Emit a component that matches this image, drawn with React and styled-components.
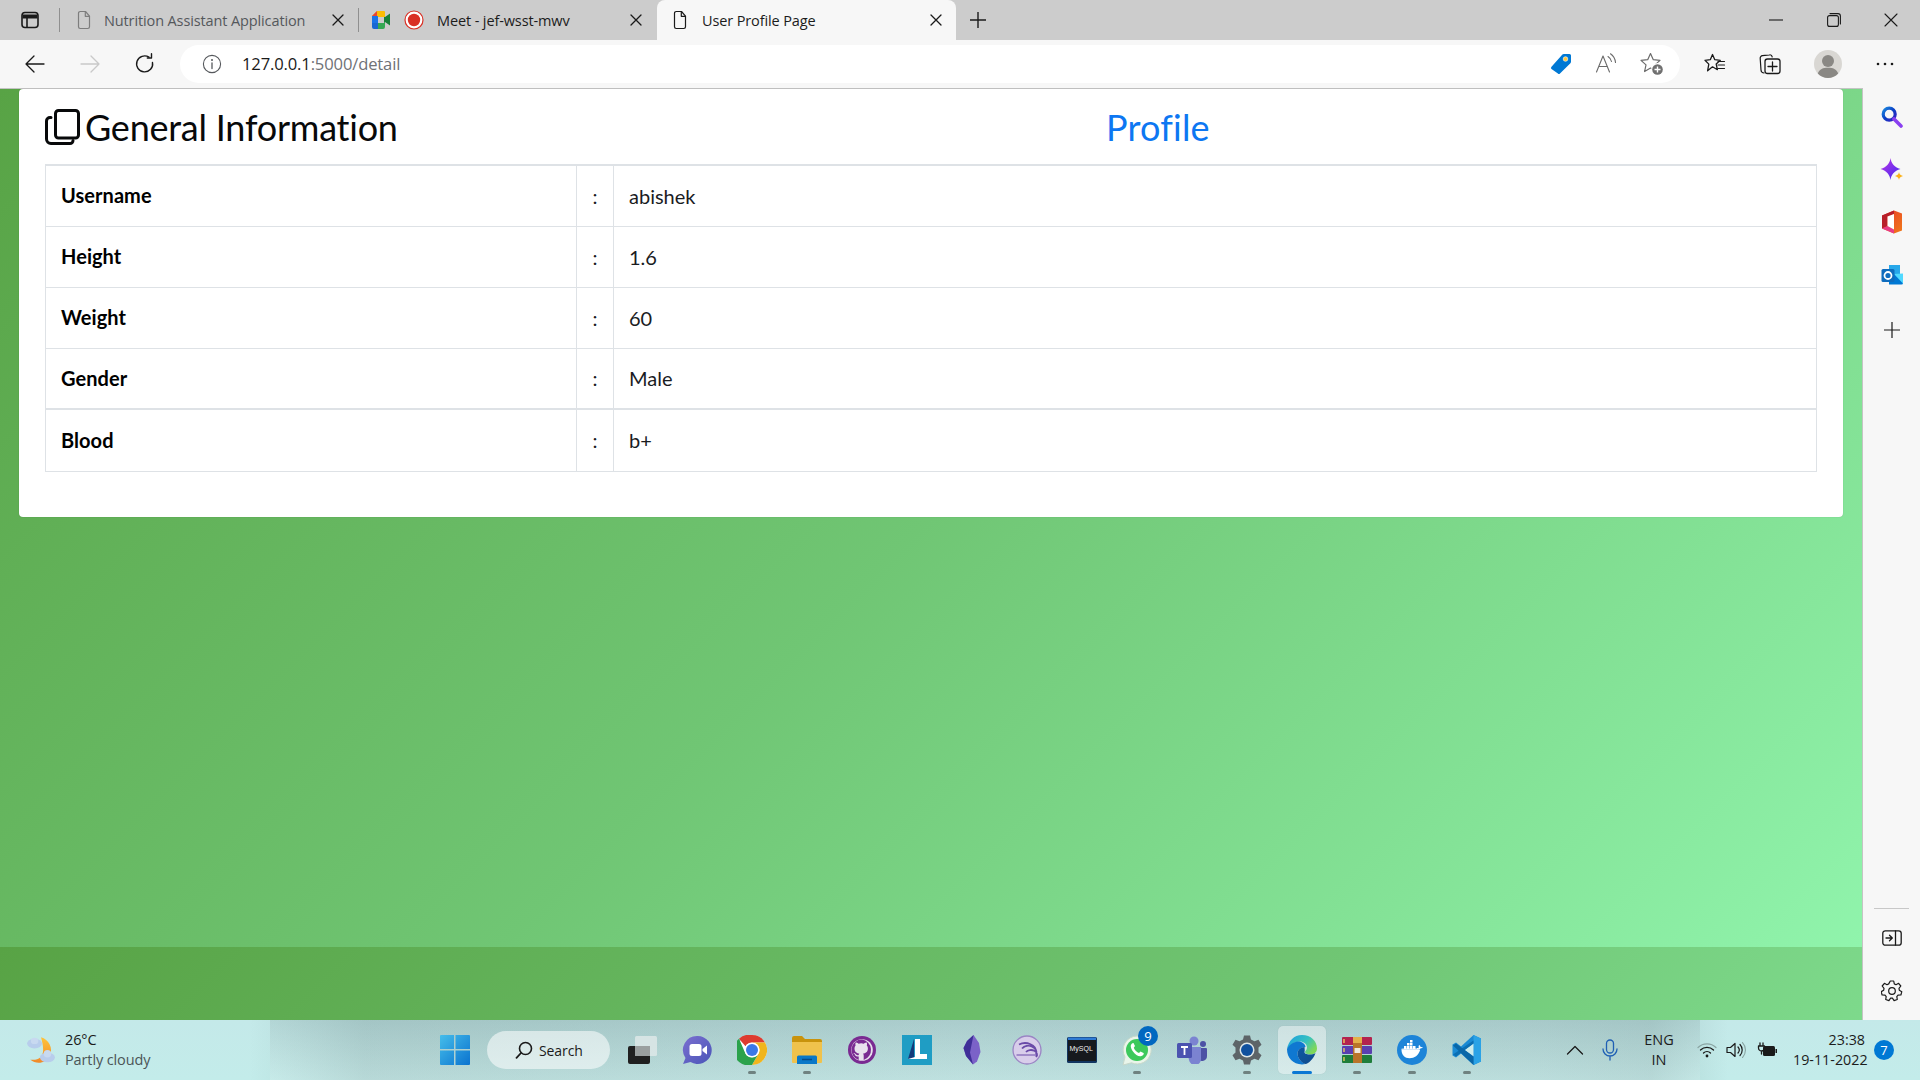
import React from "react";
import styled, { createGlobalStyle } from "styled-components";

const Global = createGlobalStyle`
  html, body { margin: 0; padding: 0; overflow: hidden; }
  body { font-family: "Open Sans", "Liberation Sans", sans-serif; }
  * { box-sizing: border-box; }
`;

const Screen = styled.div`
  width: 1920px; height: 1080px; display: flex; flex-direction: column; overflow: hidden;
`;

/* ---------- tab strip ---------- */
const TabStrip = styled.div`
  height: 40px; background: #cccccc; display: flex; align-items: flex-start; flex: none;
`;
const StripToggle = styled.div`
  width: 59px; height: 40px; display: flex; align-items: center; justify-content: center;
`;
const Separator = styled.div`
  width: 1px; height: 24px; margin-top: 8px; background: #8f8f8f; flex: none;
`;
const Tab = styled.div`
  height: ${p => (p.$active ? 44 : 40)}px; width: ${p => p.$w}px; flex: none; display: flex; align-items: center;
  padding: 0 ${p => p.$pr || 14}px 0 ${p => p.$pl}px; gap: ${p => p.$gap || 10}px; position: relative; z-index: 1;
  background: ${p => (p.$active ? "#f7f7f7" : "transparent")};
  border-radius: ${p => (p.$active ? "8px 8px 0 0" : "0")};
  padding-bottom: ${p => (p.$active ? 4 : 0)}px;
`;
const TabTitle = styled.span`
  flex: 1; font-size: 14.5px; letter-spacing: -0.12px; white-space: nowrap;
  color: ${p => p.$dim ? "#55585c" : "#1c1c1c"};
`;
const NewTab = styled.div`
  width: 44px; height: 40px; display: flex; align-items: center; justify-content: center;
`;
const WindowControls = styled.div`
  margin-left: auto; display: flex; height: 40px;
`;
const WinBtn = styled.div`
  width: 57.5px; height: 40px; display: flex; align-items: center; justify-content: center;
`;

/* ---------- toolbar ---------- */
const Toolbar = styled.div`
  height: 48px; background: #f7f7f7; display: flex; align-items: center; flex: none;
  padding-left: 7px;
`;
const NavBtn = styled.div`
  width: 55px; height: 40px; display: flex; align-items: center; justify-content: center; flex: none;
`;
const AddressBar = styled.div`
  width: 1500px; height: 38px; margin-left: 8px; margin-top: -1px; background: #fff; border-radius: 19px; flex: none;
  display: flex; align-items: center; padding: 0 16px 0 22px;
`;
const Url = styled.div`
  margin-left: 20px; font-size: 16.6px; letter-spacing: -0.15px; color: #1a1a1a; flex: 1;
  span { color: #6f7276; }
`;
const BarIcons = styled.div`
  display: flex; align-items: center; gap: 23px;
`;
const ToolIcons = styled.div`
  display: flex; align-items: center; margin-left: 7px;
`;
const ToolBtn = styled.div`
  width: ${p => p.$w}px; height: 40px; display: flex; align-items: center; justify-content: center;
`;

/* ---------- body ---------- */
const Middle = styled.div`
  flex: 1; display: flex; min-height: 0;
`;
const Page = styled.main`
  flex: 1; min-width: 0; border-top: 1px solid #c4c4c4;
  background-image: linear-gradient(135deg, #58a345 0%, #70c674 50%, #90f4ac 100%);
  background-size: 100% 858px; background-repeat: repeat-y;
  background-origin: padding-box;
`;
const Card = styled.section`
  width: 1824px; margin-left: 19px; height: 428px; background: #fff; border-radius: 4px;
  padding: 0 26px; box-shadow: 0 0 1px rgba(0,0,0,.25);
`;
const CardHead = styled.header`
  height: 75px; display: flex; align-items: center;
`;
const Title = styled.h3`
  margin: 0; width: 1062px; display: flex; align-items: center; gap: 5px;
  font: 400 36px/44px Lato, sans-serif; letter-spacing: -0.23px; color: #08090a;
`;
const ProfileLink = styled.span`
  font: 400 36px/44px Lato, sans-serif; letter-spacing: 0.2px; margin-left: -1px; color: #0d77f2;
`;
const InfoTable = styled.table`
  width: 1772px; border-collapse: collapse; table-layout: fixed;
  font-family: Lato, sans-serif; font-size: 20px; color: #1a1c1f;
`;
const Row = styled.tr`
  height: ${p => p.$thick ? 62 : 61}px; border-top: ${p => p.$thick ? 2 : 1}px solid #dee2e6;
  &:first-child { border-top: 2px solid #dee2e6; }
`;
const LabelCell = styled.td`
  width: 531px; padding: 0 15px 1px; font-weight: 700; letter-spacing: 0.05px; color: #000; border: 1px solid #dee2e6; border-top: 0;
`;
const ColonCell = styled.td`
  width: 37px; padding: 0; text-align: center; border: 1px solid #dee2e6; border-top: 0;
`;
const ValueCell = styled.td`
  padding: 0 15px; border: 1px solid #dee2e6; border-top: 0;
`;

/* ---------- sidebar ---------- */
const Sidebar = styled.aside`
  width: 58px; flex: none; background: #f7f7f7; border-left: 1px solid #c4c4c4;
  display: flex; flex-direction: column; align-items: center; padding: 3px 0;
`;
const SideBtn = styled.div`
  width: 40px; height: ${p => p.$h || 52.5}px; display: flex; align-items: center; justify-content: center; flex: none;
`;
const SideRule = styled.div`
  width: 35px; height: 1px; background: #c8c8c8; margin-top: auto; margin-bottom: 3px;
`;

/* ---------- taskbar ---------- */
const Taskbar = styled.footer`
  height: 60px; flex: none; display: flex; align-items: center;
  background:
    linear-gradient(180deg, rgba(85,105,105,.12), rgba(255,255,255,.12)) 270px 0 / 1430px 100% no-repeat,
    linear-gradient(90deg, rgba(120,150,150,0) 13%, rgba(110,140,140,.25) 19%, rgba(110,140,140,.16) 50%, rgba(110,140,140,.2) 80%, rgba(110,140,140,.25) 86%, rgba(120,150,150,0) 90%),
    linear-gradient(180deg, #c4e9e9 0%, #c3ecea 100%);
`;
const Weather = styled.div`
  width: 427px; flex: none; padding-left: 26px; display: flex; align-items: center; gap: 9px;
`;
const WeatherText = styled.div`
  font-size: 14.5px; line-height: 20px; color: #1a1a1a; letter-spacing: -0.12px;
  small { display: block; font-size: 14.5px; color: #4b5557; }
`;
const TaskIcon = styled.div`
  width: ${p => p.$w || 55}px; height: 48px; flex: none; display: flex; align-items: center; justify-content: center;
  position: relative; border-radius: 5px;
  background: ${p => p.$active ? "rgba(255,255,255,.42)" : "transparent"};
  box-shadow: ${p => p.$active ? "0 0 1px rgba(0,0,0,.15)" : "none"};
  ${p => p.$active ? "width: 48px; margin: 0 3.5px;" : ""}
`;
const RunDot = styled.span`
  position: absolute; bottom: 0; left: 50%; height: 3px; border-radius: 2px;
  width: ${p => p.$active ? 20 : 8}px; transform: translateX(-50%);
  background: ${p => p.$active ? "#0a78d4" : "#6f8280"};
`;
const Badge = styled.span`
  position: absolute; top: 0; left: 29px; width: 20px; height: 20px; border-radius: 50%;
  background: #0067c0; color: #fff; font-size: 13px; display: flex; align-items: center; justify-content: center;
`;
const SearchPill = styled.div`
  width: 123px; height: 38px; margin: 0 4px 0 5px; border-radius: 19px; flex: none;
  background: rgba(255,255,255,.55); display: flex; align-items: center; padding-left: 28px; gap: 6px;
  font-size: 14px; color: #1a1a1a; letter-spacing: -0.1px;
`;
const Tray = styled.div`
  flex: 1; display: flex; align-items: center; padding-left: 71px; height: 60px;
`;
const TrayIcon = styled.div`
  width: ${p => p.$w}px; flex: none; display: flex; align-items: center; justify-content: center;
`;
const Lang = styled.div`
  width: 48px; flex: none; text-align: center; font-size: 14.5px; line-height: 20px; color: #1c1c1c;
`;
const Clock = styled.div`
  width: 72px; text-align: right; font-size: 14.3px; line-height: 20px; color: #1c1c1c; flex: none; white-space: nowrap;
  direction: rtl;
`;
const Notify = styled.div`
  width: 20px; height: 20px; margin-left: 9px; border-radius: 50%; background: #0078d4; color: #fff; font-size: 13px;
  display: flex; align-items: center; justify-content: center; flex: none;
`;
const ClockLine = styled.div`
  direction: ltr; unicode-bidi: isolate;
`;

/* ---------- icons ---------- */
const s = { fill: "none", stroke: "currentColor", strokeLinecap: "round", strokeLinejoin: "round" };
const Ico = ({ w = 20, h, vb, children, color = "#1a1a1a" }) => (
  <svg width={w} height={h || w} viewBox={vb || `0 0 ${w} ${h || w}`} style={{ color, display: "block", flex: "none" }}>{children}</svg>
);
const PanelIcon = () => <Ico><rect x="2" y="2.5" width="16" height="15" rx="3" {...s} strokeWidth="1.6"/><path d="M2.5 6.5h15" stroke="#1a1a1a" strokeWidth="4"/><path d="M7 6v11" {...s} strokeWidth="1.6"/></Ico>;
const DocIcon = ({ color }) => <Ico w={16} h={20} color={color}><path d="M2.5 3.2A1.7 1.7 0 0 1 4.2 1.5h5.3l4 4.6v10.7a1.7 1.7 0 0 1-1.7 1.7H4.2a1.7 1.7 0 0 1-1.7-1.7z" {...s} strokeWidth="1.2"/><path d="M9.3 1.8v4.5h4" {...s} strokeWidth="1.2"/></Ico>;
const XIcon = ({ size = 12, sw = 1.3, color = "#1a1a1a" }) => <Ico w={size} color={color}><path d={`M1 1L${size - 1} ${size - 1}M${size - 1} 1L1 ${size - 1}`} {...s} strokeWidth={sw}/></Ico>;
const MeetIcon = () => <Ico w={20}>
  <path d="M1 6l5-5h7v6H7v6H1z" fill="#fbbc04"/><path d="M1 6h6v7H1z" fill="#1a73e8"/><path d="M1 13h6v6H3a2 2 0 0 1-2-2z" fill="#1967d2"/>
  <path d="M7 13h6v-3h1v7a2 2 0 0 1-2 2H7z" fill="#34a853"/><path d="M6 1h7a1 1 0 0 1 1 1v8h-1V7H7z" fill="#fbbc04"/><path d="M13 7h1l5-3.5v12L14 12h-1z" fill="#188038"/><path d="M1 6l5-5v5z" fill="#ea4335"/>
</Ico>;
const RecIcon = () => <Ico w={20}><circle cx="10" cy="10" r="9" fill="#fff" stroke="#d93025" strokeWidth="1.2"/><circle cx="10" cy="10" r="6.2" fill="#d93025"/></Ico>;
const PlusIcon = ({ size = 18, sw = 1.4, color = "#1a1a1a" }) => <Ico w={size} color={color}><path d={`M${size / 2} 1V${size - 1}M1 ${size / 2}H${size - 1}`} {...s} strokeLinecap="butt" strokeWidth={sw}/></Ico>;
const ArrowIcon = ({ dir = "left", color }) => <Ico w={22} color={color}><path d={dir === "left" ? "M20 11H2M10 3l-8 8 8 8" : "M2 11h18M12 3l8 8-8 8"} {...s} strokeWidth="1.3"/></Ico>;
const ReloadIcon = () => <Ico w={22}><path d="M18.5 9.5A8 8 0 1 1 15 4.2" {...s} strokeWidth="1.4"/><path d="M15.5 0.8v4.2h-4.2" {...s} transform="translate(2 0)" strokeWidth="1.4"/></Ico>;
const InfoIcon = () => <Ico color="#55585c"><circle cx="10" cy="10" r="8.6" {...s} strokeWidth="1.1"/><path d="M10 9v5.5" {...s} strokeWidth="1.3"/><circle cx="10" cy="5.9" r="1" fill="currentColor"/></Ico>;
const TagIcon = () => <Ico w={22}><path d="M1.5 13.7L12.4 1.6a2 2 0 0 1 1.4-.6h5.7A1.5 1.5 0 0 1 21 2.5v6.3a2 2 0 0 1-.6 1.4L10 20.5a1.5 1.5 0 0 1-2.1 0L1.5 16a1.6 1.6 0 0 1 0-2.3z" fill="#0078d4"/><circle cx="15.5" cy="6" r="2.3" fill="#ffc83d" stroke="#fff" strokeWidth=".6"/></Ico>;
const ReadIcon = () => <Ico w={22} color="#6b6b6b"><path d="M1.5 19L8 3l6.5 16M4 13.5h8.5" {...s} strokeWidth="1.1"/><path d="M13 3.5a8 8 0 0 1 3.5 5M15.5 0.8a12 12 0 0 1 5 8.7" {...s} strokeWidth="1.1"/></Ico>;
const StarAddIcon = () => <Ico w={24} color="#6b6b6b"><path d="M10.5 1.5l2.8 6.2 6.7.7-5 4.5 1.4 6.6-5.900-3.400-5.900 3.400 1.400-6.600-5-4.500 6.700-.7z" {...s} strokeWidth="1.2"/><circle cx="17.500" cy="17.500" r="6.400" fill="#fff"/><circle cx="17.500" cy="17.500" r="5.300" fill="#707070"/><path d="M17.500 14.500v6M14.500 17.500h6" stroke="#fff" strokeWidth="1.4"/></Ico>;
const FavIcon = () => <Ico w={22}><path d="M8.5 1.5l2.3 5.2 5.5.6-4.1 3.8 1.2 5.6-4.9-2.9-4.9 4 1.2-6.7L1 7.3l5.3-.6z" {...s} strokeWidth="1.3"/><path d="M14 8.5h6.5M14 12h6.5M14 15.5h6.5" {...s} strokeWidth="1.2"/></Ico>;
const CollectIcon = () => <Ico w={22}><path d="M5 20a3 3 0 0 1-3-3L1.2 5.5A2.6 2.6 0 0 1 3.5 2.6l7-.8a2.4 2.4 0 0 1 2.7 2" {...s} strokeWidth="1.2" /><rect x="6" y="6" width="15" height="14.5" rx="2.5" fill="#f7f7f7" stroke="#1a1a1a" strokeWidth="1.3"/><path d="M13.5 9v9M9 13.5h9" {...s} strokeWidth="1.3"/></Ico>;
const AvatarIcon = () => <Ico w={28}><circle cx="14" cy="14" r="14" fill="#d9d7d3"/><circle cx="14" cy="11" r="6" fill="#8a8884"/><path d="M3.8 23.5C5.5 19 9 17.8 14 17.8s8.5 1.2 10.2 5.7A14 14 0 0 1 14 28a14 14 0 0 1-10.2-4.5z" fill="#8a8884"/></Ico>;
const MoreIcon = () => <Ico w={18} h={4}><circle cx="2" cy="2" r="1.3" fill="#1a1a1a"/><circle cx="9" cy="2" r="1.3" fill="#1a1a1a"/><circle cx="16" cy="2" r="1.3" fill="#1a1a1a"/></Ico>;
const MinIcon = () => <Ico w={14} h={2}><path d="M0 1h14" stroke="#1a1a1a" strokeWidth="1.1"/></Ico>;
const MaxIcon = () => <Ico w={14}><rect x=".6" y="2.6" width="10.8" height="10.8" rx="2" {...s} strokeWidth="1.1"/><path d="M3 .6h8a2.4 2.4 0 0 1 2.4 2.4v8" {...s} strokeWidth="1.1"/></Ico>;
const CopyTitleIcon = () => <Ico w={35} h={36} color="#08090a">
  <rect x="10.5" y="1.5" width="23" height="27.500" rx="3" {...s} strokeWidth="3"/>
  <path d="M6 8.5 H5 A3.5 3.5 0 0 0 1.5 12 V30 A4.5 4.5 0 0 0 6 34.5 H25 A3 3 0 0 0 28 31.5" {...s} strokeWidth="3"/>
</Ico>;

const BingIcon = () => <Ico w={22}><defs><linearGradient id="bs" x1="0" y1="0" x2="1" y2="1"><stop offset="0" stopColor="#1c8ae0"/><stop offset=".5" stopColor="#0b3fc4"/><stop offset="1" stopColor="#3a1ec2"/></linearGradient></defs><circle cx="8.2" cy="8.2" r="6" fill="none" stroke="url(#bs)" strokeWidth="3.2"/><path d="M13 13l7 7" stroke="#8a3ff0" strokeWidth="3.6" strokeLinecap="round"/></Ico>;
const SparkleIcon = () => <Ico w={24} h={24}><defs><linearGradient id="sp" x1="0" y1="0" x2="1" y2="1"><stop offset="0" stopColor="#c034e6"/><stop offset="1" stopColor="#3a2cf0"/></linearGradient></defs><path d="M10.500 0c.8 5.500 3.500 9 10 11-6.500 2-9.200 5.500-10 11-.8-5.500-3.500-9-10-11 6.500-2 9.200-5.500 10-11z" fill="url(#sp)"/><path d="M19 14c.4 2.200 1.200 3.100 4 4-2.800.9-3.600 1.800-4 4-.4-2.200-1.200-3.100-4-4 2.800-.9 3.600-1.800 4-4z" fill="#fbb21b"/></Ico>;
const OfficeIcon = () => <Ico w={22} h={24}><defs><linearGradient id="of" x1="0" y1="0" x2="1" y2="1"><stop offset="0" stopColor="#e83a2a"/><stop offset="1" stopColor="#f07a1a"/></linearGradient></defs><path d="M1 5.500L13 0.500 21 3.500V20.500L13 23.500 1 18.500z" fill="url(#of)"/><path d="M1 5.500L13 .5v3.500L6.500 6.500V16L1 18.500z" fill="#b81f2a"/><path d="M1 18.500l5.500-2.500 6.500 3.500v4z" fill="#e83b86"/><path d="M6.500 6.500L13 4v15.500L6.500 16z" fill="#fff"/></Ico>;
const OutlookIcon = () => <Ico w={22} h={22}><path d="M8 1h11v9H8z" fill="#28a8ea"/><path d="M8 10h12l2 0v9a1.500 1.500 0 0 1-1.500 1.500H8z" fill="#0078d4"/><path d="M13 10l9-0.500v10z" fill="#50d9ff"/><rect x="0.500" y="5" width="13" height="13" rx="1.500" fill="#0f6cbd"/><circle cx="7" cy="11.500" r="3.500" fill="none" stroke="#fff" strokeWidth="1.800"/></Ico>;
const SplitIcon = () => <Ico w={20} h={16}><rect x=".8" y=".8" width="18.400" height="14.400" rx="2.500" {...s} strokeWidth="1.300"/><path d="M13.500 1v14" {...s} strokeWidth="1.300"/><path d="M4 8h6M7.500 5.200L10.300 8l-2.800 2.800" {...s} strokeWidth="1.300"/></Ico>;
const GearIcon = () => <Ico w={22}><path d="M9.300 1.500h3.400l.6 2.900 1.700.8 2.600-1.400 2.200 2.700-1.800 2.300.3 1.900 2.500 1.500-.9 3.300-2.900.1-1.200 1.500.5 2.900-3.200 1.100-1.700-2.400h-1.800l-1.700 2.400-3.200-1.100.5-2.900-1.200-1.500-2.900-.1-.9-3.300 2.500-1.500.3-1.900L1.200 6.500l2.200-2.700L6 5.200l1.700-.8z" {...s} strokeWidth="1.200" transform="translate(0 -.5)"/><circle cx="11" cy="11" r="3.300" {...s} strokeWidth="1.200"/></Ico>;

const WeatherIcon = () => <Ico w={30} h={30} vb="1 1 28 28"><defs><linearGradient id="mn" x1="0" y1="0" x2="0" y2="1"><stop offset="0" stopColor="#ffc43a"/><stop offset="1" stopColor="#f0892a"/></linearGradient></defs><path d="M15 3c7 2 12 10 8 18-3 6-12 8-18 3 7 1 12-2 12-9 0-5-1-8-2-12z" fill="url(#mn)"/><ellipse cx="9" cy="9" rx="7" ry="4.500" fill="#b8cdec"/><ellipse cx="9" cy="6.500" rx="3.500" ry="3" fill="#c8d9f0"/><ellipse cx="21" cy="22" rx="7" ry="4.500" fill="#b8cdec"/><ellipse cx="21" cy="18.500" rx="3.500" ry="3.500" fill="#c8d9f0"/></Ico>;
const StartIcon = () => <Ico w={30} h={30}><defs><linearGradient id="w1" x1="0" y1="0" x2="1" y2="1"><stop offset="0" stopColor="#45bdea"/><stop offset="1" stopColor="#0a73cf"/></linearGradient></defs><path d="M0 1a1 1 0 0 1 1-1h13v14H0zM15.500 0H29a1 1 0 0 1 1 1v13H15.500zM0 15.500h14V30H1a1 1 0 0 1-1-1zM15.500 15.500H30V29a1 1 0 0 1-1 1H15.500z" fill="url(#w1)"/></Ico>;
const SearchGlass = () => <Ico w={18}><circle cx="10.500" cy="7.500" r="6" {...s} strokeWidth="1.600"/><path d="M6 12L1.500 16.800" {...s} strokeWidth="1.800"/></Ico>;
const TaskViewIcon = () => <Ico w={30} h={30}><rect x="1" y="11" width="22" height="18" rx="2" fill="#202020"/><rect x="8" y="1" width="22" height="20" rx="1.500" fill="#dde8e8" fillOpacity=".85"/><rect x="8" y="11" width="15" height="10" fill="#9a9f9f"/></Ico>;
const ChatIcon = () => <Ico w={30} h={30}><defs><linearGradient id="ct" x1="0" y1="0" x2="1" y2="1"><stop offset="0" stopColor="#7b6fd0"/><stop offset="1" stopColor="#4a55b8"/></linearGradient></defs><path d="M15.500 1a14 14 0 1 1-7 26L1 29l2.500-6A14 14 0 0 1 15.500 1z" fill="url(#ct)"/><rect x="7.500" y="9" width="12" height="12" rx="2.500" fill="#fff"/><path d="M20.500 14l4.500-3.500v9L20.500 16z" fill="#fff"/></Ico>;
const ChromeIcon = () => <Ico w={30} h={30}><circle cx="15" cy="15" r="15" fill="#fff"/><path d="M15 0a15 15 0 0 1 13 7.500H15A7.500 7.500 0 0 0 8.500 11.250L2 3.800A15 15 0 0 1 15 0z" fill="#dd3b2f"/><path d="M28 7.500A15 15 0 0 1 15 30l6.500-11.250A7.500 7.500 0 0 0 21.500 11.250 7.500 7.500 0 0 0 15 7.500z" fill="#f0b51d"/><path d="M15 30A15 15 0 0 1 2 3.800l6.500 14.950A7.500 7.500 0 0 0 21.500 18.750z" fill="#2ba24c"/><circle cx="15" cy="15" r="7.300" fill="#fff"/><circle cx="15" cy="15" r="6" fill="#3b78e7"/></Ico>;
const FolderIcon = () => <Ico w={30} h={28}><path d="M0 2a2 2 0 0 1 2-2h8l3 3h15a2 2 0 0 1 2 2v3H0z" fill="#c9930c"/><path d="M0 6h30v20a1 1 0 0 1-1 1H1a1 1 0 0 1-1-1z" fill="#f0c24c"/><path d="M5 21a1.500 1.500 0 0 1 1.500-1.500h17A1.500 1.500 0 0 1 25 21v7H5z" fill="#0a78c8"/><path d="M10 23.500h10" stroke="#064b8a" strokeWidth="1.500"/></Ico>;
const GithubIcon = () => <Ico w={30} h={30}><circle cx="15" cy="15" r="14" fill="#7a2a92"/><circle cx="15" cy="15" r="10.800" fill="#e9e2ee"/><path d="M15 4.500a10.500 10.500 0 0 0-3.300 20.500v-3.500c-3 .6-3.600-1.400-3.600-1.400-.5-1.200-1.200-1.500-1.200-1.500-1-.6.100-.6.100-.6 1.100.1 1.600 1.100 1.600 1.100.9 1.600 2.500 1.200 3.100.9.100-.7.400-1.200.7-1.400-2.400-.3-4.900-1.200-4.900-5.300 0-1.200.4-2.100 1.100-2.900-.1-.3-.5-1.300.1-2.800 0 0 .9-.3 2.900 1.100a10 10 0 0 1 5.200 0c2-1.400 2.900-1.100 2.900-1.100.6 1.500.2 2.500.1 2.800.7.800 1.100 1.700 1.100 2.900 0 4.100-2.500 5-4.900 5.300.4.300.7 1 .7 2v4.300A10.500 10.500 0 0 0 15 4.500z" fill="#7a2a92"/></Ico>;
const LearnIcon = () => <Ico w={30} h={30}><rect width="30" height="30" fill="#1f9dc4"/><path d="M6 24L12 4v20z" fill="#123a7a"/><path d="M13 4h5v15h7v5H6l7-2z" fill="#fff"/></Ico>;
const ObsidianIcon = () => <Ico w={18} h={30}><path d="M10.500 0L4 6 0.500 13l2.500 8 7 8.500 4-3L17.500 17 16 8z" fill="#7b62c8"/><path d="M10.500 0L4 6 0.500 13l2.500 8 7 8.500-3-12z" fill="#3f2f98"/></Ico>;
const TorrentIcon = () => <Ico w={30} h={30}><circle cx="15" cy="15" r="14" fill="#d8cdea" stroke="#9a85c4" strokeWidth="1.300"/><path d="M24 17A11 8.500 0 0 0 7 9.500M24 19.500A8 6.500 0 0 0 10 13.500 M24 22a6 4.500 0 0 0-10-5" fill="none" stroke="#6a4aa8" strokeWidth="1.800"/><path d="M4.500 20h21" stroke="#6a4aa8" strokeWidth="1"/></Ico>;
const MysqlIcon = () => <Ico w={30} h={26}><rect width="30" height="26" rx="1.500" fill="#123460"/><rect x="1" y="3" width="28" height="21" fill="#16191d"/><rect x="1" y="0.500" width="28" height="2.500" fill="#2f7bd4"/><text x="2.500" y="13.500" fontSize="7" fontFamily="Liberation Sans, sans-serif" fill="#eee">MySQL</text></Ico>;
const WhatsappIcon = () => <Ico w={30} h={32}><path d="M15 2a14 14 0 0 0-12 21L1 31l8.500-2.200A14 14 0 1 0 15 2z" fill="#e9f5ea" stroke="#c8d8ca" strokeWidth="1"/><circle cx="15" cy="16" r="11" fill="#3cc95c"/><path d="M10 9.500c-2 1.500-1.500 4.500 1 8s6 5.500 8.500 4.500 2.500-2.500 2-3l-3-1.500-1.500 1.500c-2-.5-4.500-3-5.200-5.200L13 12 11.500 9c-.4-.2-1-.1-1.500.5z" fill="#fff"/></Ico>;
const TeamsIcon = () => <Ico w={30} h={28}><circle cx="17" cy="5" r="4.500" fill="#7b83d1"/><circle cx="26" cy="8" r="3" fill="#4c51a5"/><path d="M21 12h8a1 1 0 0 1 1 1v7a5 5 0 0 1-9 3z" fill="#4c51a5"/><path d="M9 11h15v11a6 6 0 0 1-12 2z" fill="#7b83d1"/><rect y="7" width="15" height="15" rx="1.500" fill="#4b53b0"/><path d="M4 11h7M7.500 11v8" stroke="#fff" strokeWidth="1.800"/></Ico>;
const SettingsIcon = () => <Ico w={30} h={30}><path d="M12 0.500h6l1 4 3.500 1.800 4-1.500 3 5-3 2.700v5l3 2.700-3 5-4-1.500-3.500 1.800-1 4h-6l-1-4-3.500-1.800-4 1.500-3-5 3-2.700v-5L0.500 9.800l3-5 4 1.500L11 4.500z" fill="#5d6468"/><circle cx="15" cy="15" r="7.500" fill="#dfe6e8"/><circle cx="15" cy="15" r="6" fill="#11509e"/></Ico>;
const EdgeIcon = () => <Ico w={32} h={32}><defs><linearGradient id="e1" x1="0" y1="0" x2="1" y2=".6"><stop offset="0" stopColor="#1b9de2"/><stop offset=".6" stopColor="#35c1c0"/><stop offset="1" stopColor="#7fd859"/></linearGradient><linearGradient id="e2" x1="0" y1="0" x2="1" y2="1"><stop offset="0" stopColor="#0c59a4"/><stop offset="1" stopColor="#114a8b"/></linearGradient></defs><path d="M16 1c9 0 15 6 15 13.500 0 4-3.500 6-7 6-3 0-5-1-5-2.500 0-1.200 2-1.800 2-4.500 0-3.500-3.500-6-7-6-5 0-9 3.500-13 7.500C2.500 7 8 1 16 1z" fill="url(#e1)"/><path d="M1 15C4 9.500 9 7.500 12.500 7.500c3.500 0 7 2.500 7 5.500-5 0-8 3-8 6.500 0 4.500 4 9 8 10.500-1 .3-2.500.5-3.500.5C7 30 1 24 1 15z" fill="#0f78d1"/><path d="M11.500 19.500c0-3.500 3-6.500 7-6.500 0 1.500.5 2.500 0 5-.3 1.500 2 2.500 5 2.500 2 0 4.500-.5 6-1.500-2 6-7 10.500-10 11-4-1-8-6-8-10.500z" fill="url(#e2)"/></Ico>;
const WinrarIcon = () => <Ico w={30} h={26}><rect y="0" width="30" height="8" rx="1" fill="#b3234e"/><rect y="9" width="30" height="8" rx="1" fill="#5a3fb0"/><rect y="18" width="30" height="8" rx="1" fill="#1f7d3a"/><rect x="11" width="9" height="26" fill="#b9742a"/><rect x="11" y="0" width="9" height="6" fill="#e4b04a"/><rect x="12.500" y="11" width="6" height="5" fill="#efe8d8"/><path d="M2 2v4M2 11v4M2 20v4" stroke="#f4d35e" strokeWidth="1.300"/></Ico>;
const DockerIcon = () => <Ico w={30} h={30}><circle cx="15" cy="15" r="15" fill="#1d84d8"/><path d="M4.500 14.800h17c1 0 1.700-.6 2.200-1.500 1 .1 1.800-.1 2.300-.7-.8-.6-1.600-.7-2.400-.5-.2-.9-.7-1.500-1.500-2-.6.9-.7 2-.3 3-1.500.6-2 .4-17.300.6z" fill="#fff"/><path d="M4.500 14.800c0 5 3.300 8.500 8 8.500 5 0 9-2.800 10.700-8.500z" fill="#fff"/><path d="M7 11h2.500v3H7zM10 11h2.500v3H10zM13 11h2.500v3H13zM16 11h2.500v3H16zM10 8h2.500v2.600H10zM13 8h2.500v2.600H13zM13 5h2.500v2.600H13z" fill="#fff"/></Ico>;
const VscodeIcon = () => <Ico w={30} h={30}><path d="M21.500 0L29 3.500v23L21.500 30 9 18.500l-5 4-3.500-2v-11l3.500-2 5 4z" fill="#1a8ad4"/><path d="M21.500 0L29 3.500v23L21.500 30z" fill="#2aa2e6"/><path d="M21.500 8.500L12.500 15l9 6.500z" fill="#cdeced"/><path d="M4 21.500l-3-2 20.500-14v3z" fill="#0c6fb3"/><path d="M4 8.500L1 10.500l20.500 19.500V21.500z" fill="#0a67a8"/></Ico>;

const ChevronUp = () => <Ico w={18} h={10}><path d="M1.500 9L9 1.500 16.500 9" {...s} strokeWidth="1.300"/></Ico>;
const MicIcon = () => <Ico w={16} h={22} color="#1f5fb4"><rect x="4.500" y="1" width="7" height="13" rx="3.500" {...s} strokeWidth="1.300"/><path d="M1 10a7 7 0 0 0 14 0M8 17v4" {...s} strokeWidth="1.300"/></Ico>;
const WifiIcon = () => <Ico w={20} h={16}><path d="M1 5.500a13 13 0 0 1 18 0" {...s} stroke="#8aa5a3" strokeWidth="1.200"/><path d="M3.500 8a9.500 9.500 0 0 1 13 0M6.500 11a5 5 0 0 1 7 0" {...s} strokeWidth="1.300"/><circle cx="10" cy="14" r="1.400" fill="#1a1a1a"/></Ico>;
const SpeakerIcon = () => <Ico w={20} h={18}><path d="M1 6.500h3.500L9 2.500v13l-4.500-4H1z" {...s} strokeWidth="1.200"/><path d="M12 6a4.500 4.500 0 0 1 0 6M14 3.500a8 8 0 0 1 0 11" {...s} strokeWidth="1.200"/><path d="M16.500 1.500a11 11 0 0 1 0 15" {...s} stroke="#8aa5a3" strokeWidth="1.100"/></Ico>;
const BatteryIcon = () => <Ico w={20} h={16}><path d="M3 1v3M6 1v3M1.500 4h6v2a3 3 0 0 1-6 0zM4.500 9v3" {...s} strokeWidth="1.300"/><rect x="6" y="4" width="12" height="10" rx="1.500" fill="#1a1a1a"/><path d="M18.500 7h1.500v4h-1.500z" fill="#1a1a1a"/></Ico>;

const rows = [["Username", "abishek"], ["Height", "1.6"], ["Weight", "60"], ["Gender", "Male"], ["Blood", "b+"]];

const apps = [
  { k: "task", el: <TaskViewIcon /> }, { k: "chat", el: <ChatIcon /> },
  { k: "chrome", el: <ChromeIcon />, run: 1 }, { k: "folder", el: <FolderIcon />, run: 1 },
  { k: "gh", el: <GithubIcon /> }, { k: "l", el: <LearnIcon /> }, { k: "obs", el: <ObsidianIcon /> },
  { k: "tor", el: <TorrentIcon /> }, { k: "mysql", el: <MysqlIcon /> },
  { k: "wa", el: <WhatsappIcon />, run: 1, badge: "9" }, { k: "teams", el: <TeamsIcon /> },
  { k: "set", el: <SettingsIcon />, run: 1 }, { k: "edge", el: <EdgeIcon />, active: 1, run: 1 },
  { k: "rar", el: <WinrarIcon />, run: 1 }, { k: "dock", el: <DockerIcon />, run: 1 }, { k: "vs", el: <VscodeIcon />, run: 1 },
];

export default function App() {
  return (
    <Screen>
      <Global />
      <TabStrip>
        <StripToggle><PanelIcon /></StripToggle>
        <Separator />
        <Tab $w={298} $pl={16} $gap={12}>
          <DocIcon color="#7d7d7d" /><TabTitle $dim>Nutrition Assistant Application</TabTitle><XIcon />
        </Tab>
        <Separator />
        <Tab $w={298} $pl={12} $gap={13} $pr={15}>
          <MeetIcon /><RecIcon /><TabTitle>Meet - jef-wsst-mwv</TabTitle><XIcon />
        </Tab>
        <Tab $active $w={299} $pl={15} $gap={14}>
          <DocIcon color="#1a1a1a" /><TabTitle>User Profile Page</TabTitle><XIcon />
        </Tab>
        <NewTab><PlusIcon /></NewTab>
        <WindowControls>
          <WinBtn><MinIcon /></WinBtn>
          <WinBtn><MaxIcon /></WinBtn>
          <WinBtn><XIcon size={14} sw={1.1} /></WinBtn>
        </WindowControls>
      </TabStrip>
      <Toolbar>
        <NavBtn><ArrowIcon /></NavBtn>
        <NavBtn><ArrowIcon dir="right" color="#c9c9c9" /></NavBtn>
        <NavBtn><ReloadIcon /></NavBtn>
        <AddressBar>
          <InfoIcon />
          <Url>127.0.0.1<span>:5000/detail</span></Url>
          <BarIcons><TagIcon /><ReadIcon /><StarAddIcon /></BarIcons>
        </AddressBar>
        <ToolIcons>
          <ToolBtn $w={56}><FavIcon /></ToolBtn>
          <ToolBtn $w={54}><CollectIcon /></ToolBtn>
          <ToolBtn $w={62}><AvatarIcon /></ToolBtn>
          <ToolBtn $w={52}><MoreIcon /></ToolBtn>
        </ToolIcons>
      </Toolbar>
      <Middle>
        <Page>
          <Card>
            <CardHead>
              <Title><CopyTitleIcon />General Information</Title>
              <ProfileLink>Profile</ProfileLink>
            </CardHead>
            <InfoTable>
              <tbody>
                {rows.map(([label, value], i) => (
                  <Row key={label} $thick={i === 4}>
                    <LabelCell>{label}</LabelCell>
                    <ColonCell>:</ColonCell>
                    <ValueCell>{value}</ValueCell>
                  </Row>
                ))}
              </tbody>
            </InfoTable>
          </Card>
        </Page>
        <Sidebar>
          <SideBtn><BingIcon /></SideBtn>
          <SideBtn><SparkleIcon /></SideBtn>
          <SideBtn><OfficeIcon /></SideBtn>
          <SideBtn><OutlookIcon /></SideBtn>
          <SideBtn $h={58}><PlusIcon sw={1.2} /></SideBtn>
          <SideRule />
          <SideBtn><SplitIcon /></SideBtn>
          <SideBtn><GearIcon /></SideBtn>
        </Sidebar>
      </Middle>
      <Taskbar>
        <Weather>
          <WeatherIcon />
          <WeatherText>26°C<small>Partly cloudy</small></WeatherText>
        </Weather>
        <TaskIcon><StartIcon /></TaskIcon>
        <SearchPill><SearchGlass />Search</SearchPill>
        {apps.map(a => (
          <TaskIcon key={a.k} $active={a.active}>
            {a.el}
            {a.badge && <Badge>{a.badge}</Badge>}
            {a.run && <RunDot $active={a.active} />}
          </TaskIcon>
        ))}
        <Tray>
          <TrayIcon $w={20}><ChevronUp /></TrayIcon>
          <TrayIcon $w={50}><MicIcon /></TrayIcon>
          <Lang>ENG<br />IN</Lang>
          <TrayIcon $w={48}><WifiIcon /></TrayIcon>
          <TrayIcon $w={10}><SpeakerIcon /></TrayIcon>
          <TrayIcon $w={52}><BatteryIcon /></TrayIcon>
          <Clock><ClockLine>23:38</ClockLine><ClockLine>19-11-2022</ClockLine></Clock>
          <Notify>7</Notify>
        </Tray>
      </Taskbar>
    </Screen>
  );
}
